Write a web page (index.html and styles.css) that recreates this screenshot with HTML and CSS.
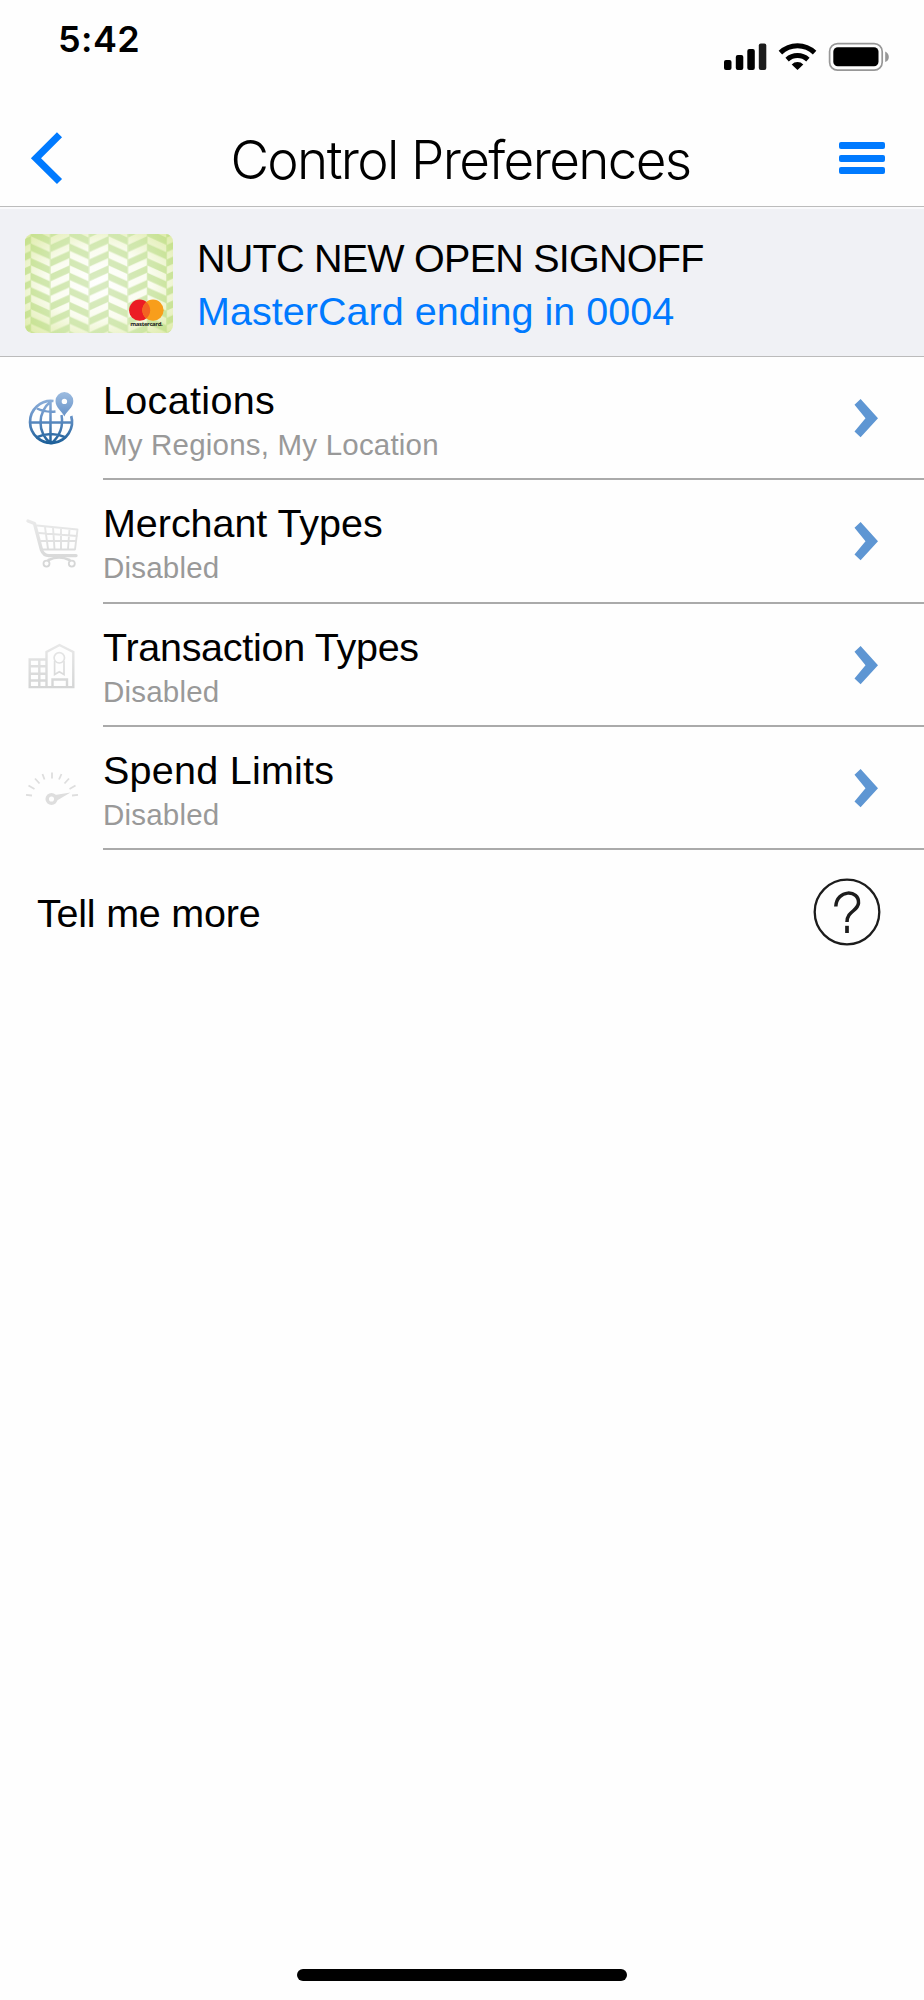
FILE: index.html
```html
<!DOCTYPE html>
<html lang="en">
<head>
<meta charset="utf-8">
<title>Control Preferences</title>
<link rel="stylesheet" href="styles.css">
</head>
<body>
<div class="screen">
  <div class="status">
    <span class="time">5:42</span>
    <svg class="status-icons" width="168" height="32" viewBox="722 41 168 32">
      <rect x="724" y="60" width="7.5" height="10" rx="2"/>
      <rect x="735.8" y="55" width="7.5" height="15" rx="2"/>
      <rect x="747.3" y="49" width="7.5" height="21" rx="2"/>
      <rect x="758.8" y="43.5" width="7.5" height="26.5" rx="2" fill="#1c1c1c"/>
      <g fill="none" stroke="#000" stroke-width="5">
        <path d="M780.4 52.6A24.5 24.5 0 0 1 814.6 52.6"/>
        <path d="M787.1 59.6A15.5 15.5 0 0 1 807.9 59.6"/>
      </g>
      <path d="M797.5 70L791.7 64.4A8.3 8.3 0 0 1 803.3 64.4Z"/>
      <rect x="829.6" y="43.6" width="52.6" height="26.6" rx="8" fill="none" stroke="#979797" stroke-width="1.7"/>
      <rect x="833.3" y="47.3" width="45.2" height="19" rx="4.5"/>
      <path d="M885.2 51.5Q888.8 53 888.8 57T885.2 62Z" fill="#979797"/>
    </svg>
  </div>
  <header class="nav">
    <svg width="36" height="56" viewBox="29 130 36 56"><path d="M59.5 134.7L36 158.2L59.5 181.5" fill="none" stroke="#007aff" stroke-width="7.2" stroke-linejoin="miter"/></svg>
    <h1 class="title">Control Preferences</h1>
    <div class="menu"><i></i><i></i><i></i></div>
  </header>
  <section class="card-info">
    <svg class="card" width="148" height="99" viewBox="0 0 148 99">
      <defs>
        <radialGradient id="glow" cx=".5" cy=".5" r=".72">
          <stop offset="0" stop-color="#fff"/><stop offset=".5" stop-color="#fafcef"/><stop offset="1" stop-color="#dceaa4"/>
        </radialGradient>
        <radialGradient id="leaf" gradientUnits="userSpaceOnUse" cx="74" cy="50" r="95">
          <stop offset="0" stop-color="#d9ebc2"/><stop offset=".6" stop-color="#d0e7ac"/><stop offset="1" stop-color="#c3df83"/>
        </radialGradient>
        <pattern id="chevron" patternUnits="userSpaceOnUse" x="5.8" y="0" width="38.8" height="14.6">
          <path d="M0-5.1L19.4 3.6V10.9L0 2.2ZM0 9.5L19.4 18.2V25.500L0 16.800ZM19.400-3.700L38.800-12.400V-5.100L19.400 3.600ZM19.400 10.900L38.800 2.200V9.500L19.400 18.200Z" fill="#fff"/>
        </pattern>
        <mask id="stripes"><rect width="148" height="99" fill="url(#chevron)"/><path d="M5.8 0V99M25.2 0V99M44.6 0V99M64 0V99M83.4 0V99M102.8 0V99M122.2 0V99M141.6 0V99" stroke="#fff" stroke-opacity=".55" stroke-width="1"/></mask>
        <clipPath id="shape"><rect width="148" height="99" rx="7.5"/></clipPath>
      </defs>
      <g clip-path="url(#shape)">
        <rect width="148" height="99" fill="url(#glow)"/>
        <rect width="148" height="99" fill="url(#leaf)" mask="url(#stripes)"/>
      </g>
      <circle cx="114.7" cy="76.2" r="10.6" fill="#eb1c24"/>
      <circle cx="128" cy="76.2" r="10.6" fill="#f89e1b"/>
      <path d="M121.3 68A10.6 10.6 0 0 1 121.3 84.4A10.6 10.6 0 0 1 121.3 68Z" fill="#f26322"/>
      <text x="105.3" y="92.4" textLength="32.5" class="brand">mastercard.</text>
    </svg>
    <div class="card-text">
      <div class="card-name">NUTC NEW OPEN SIGNOFF</div>
      <div class="card-number">MasterCard ending in 0004</div>
    </div>
  </section>
  <main>
    <div class="row">
      <svg class="icon" width="103" height="120" viewBox="0 -13 103 120">
        <defs><linearGradient id="blue" gradientUnits="userSpaceOnUse" x1="0" y1="22" x2="0" y2="75"><stop offset="0" stop-color="#9dbce0"/><stop offset=".45" stop-color="#6893c8"/><stop offset="1" stop-color="#185c96"/></linearGradient></defs>
        <g fill="none" stroke="url(#blue)" stroke-width="2.7">
          <path d="M53.5 31A21 21 0 1 0 71.2 46"/>
          <path d="M50.500 30.600V74M29.500 52.600L72.500 52.601M51 31C37 43 37 62 51 73.800M61.500 45C63.500 56 60 66 51 73.800M37 38.500Q45 42.500 55.500 41.500M36 67.500Q51 60.500 66 67.500" stroke-width="2.5"/>
        </g>
        <path fill="url(#blue)" fill-rule="evenodd" d="M64.300 46.500C62 41 55.500 38 55.500 31A8.900 8.900 0 0 1 73.300 31C73.300 38 66.500 41 64.300 46.500ZM64.400 28.700A2.700 2.700 0 1 0 64.400 34.100A2.700 2.700 0 1 0 64.400 28.700Z"/>
      </svg>
      <div class="row-body"><div><div class="label l1">Locations</div><div class="sub">My Regions, My Location</div></div>
      <svg class="chev" width="26" height="40" viewBox="0 0 26 40"><path d="M6.600 1L24 20.300L6.600 39.300L.5 33.500L11.500 20.300L.5 6.700Z"/></svg></div>
    </div>
    <div class="row">
      <svg class="icon" width="103" height="120" viewBox="0 -10 103 120">
        <defs><linearGradient id="gray" gradientUnits="userSpaceOnUse" x1="0" y1="25" x2="0" y2="78"><stop offset="0" stop-color="#ececec"/><stop offset="1" stop-color="#d4d5d5"/></linearGradient></defs>
        <g fill="none" stroke="url(#gray)" stroke-linecap="round" stroke-linejoin="round">
          <path d="M28 31L34.500 33.500L41.500 60Q43.500 65.600 49 65.600H76" stroke-width="3.400"/>
          <path d="M37 35.500L77.500 39.500L75 59.500H42.500M39 43L77 46M41 51H76M45 37L48 59M53 37.500L54.500 59M61 38.500V59M69.500 39L68 59" stroke-width="1.900"/>
          <circle cx="46.500" cy="73.600" r="3" stroke-width="1.800"/><circle cx="71.800" cy="73.600" r="3" stroke-width="1.800"/>
          <path d="M48.500 70Q59 65 69.500 70" stroke-width="2.600"/>
        </g>
      </svg>
      <div class="row-body"><div><div class="label l2">Merchant Types</div><div class="sub">Disabled</div></div>
      <svg class="chev" width="26" height="40" viewBox="0 0 26 40"><path d="M6.600 1L24 20.300L6.600 39.300L.5 33.500L11.500 20.300L.5 6.700Z"/></svg></div>
    </div>
    <div class="row">
      <svg class="icon" width="103" height="120" viewBox="0 -6.5 103 120">
        <g fill="none" stroke="url(#gray)" stroke-width="2.4">
          <path d="M46.500 49V41.500L59.500 34.500L73.300 41.500V76.600H29.700V49ZM46.500 49V76.600M39.300 49V76.600M30 55.800H46.500M30 63.200H46.500M30 70H46.500"/>
          <circle cx="59.300" cy="47.300" r="5.200" stroke-width="1.700"/>
          <path d="M54.600 50.500V64L59.300 61.200L64 64V50.500" stroke-width="1.700"/>
          <path d="M52.500 76.500V69H67V76.500"/>
        </g>
      </svg>
      <div class="row-body"><div><div class="label l3">Transaction Types</div><div class="sub">Disabled</div></div>
      <svg class="chev" width="26" height="40" viewBox="0 0 26 40"><path d="M6.600 1L24 20.300L6.600 39.300L.5 33.500L11.500 20.300L.5 6.700Z"/></svg></div>
    </div>
    <div class="row">
      <svg class="icon" width="103" height="120" viewBox="0 0 103 120">
        <g stroke="#dedede" stroke-width="1.800" fill="none">
          <path d="M26 67.800L32 68.500M28.500 58.500L34.500 62M35 51.500L39.500 56.500M42.500 47L44.500 52.500M52 45.500V51.500M61.500 47L59 52.500M69 51.500L64.500 56.500M75.500 58.500L69.500 62M78 67.800L72 68.500"/>
          <circle cx="51.500" cy="72" r="4.300" stroke-width="3.500"/>
        </g>
        <path d="M55 68L70.500 65.500L57 73.500Z" fill="#dedede"/>
      </svg>
      <div class="row-body"><div><div class="label l4">Spend Limits</div><div class="sub">Disabled</div></div>
      <svg class="chev" width="26" height="40" viewBox="0 0 26 40"><path d="M6.600 1L24 20.300L6.600 39.300L.5 33.500L11.500 20.300L.5 6.700Z"/></svg></div>
    </div>
    <div class="more">
      <span class="more-label">Tell me more</span>
      <svg class="help" width="70" height="70" viewBox="0 0 70 70" fill="none" stroke="#1c1c1c">
        <circle cx="35" cy="35" r="32.300" stroke-width="2.300"/>
        <path d="M23.800 29.500C24.500 12 47.500 12.500 46.500 26C46 34 35 34 35 45" stroke-width="3.500"/><path d="M35 48.800V56" stroke-width="3.700"/>
      </svg>
    </div>
  </main>
  <div class="home"></div>
</div>
</body>
</html>
```
FILE: styles.css
```css
* { box-sizing: border-box; }
body { margin: 0; background: #fefefe; color: #000; font-family: "Liberation Sans", Arial, sans-serif; }
.screen { width: 924px; height: 2000px; display: flex; flex-direction: column; }
.status { height: 110px; display: flex; justify-content: space-between; align-items: flex-start; padding: 17px 34px 0 58px; }
.time { font: 600 36px/44px Inter, sans-serif; letter-spacing: .4px; }
.status-icons { margin-top: 24px; }
.nav { height: 97px; display: flex; justify-content: space-between; align-items: center; padding: 0 39px 0 29px; border-bottom: 1px solid #bcbcbc; }
.title { margin: 4px 0 0 17px; font: 300 53px/64px Inter, sans-serif; letter-spacing: -1.65px; white-space: nowrap; }
.menu { width: 46px; display: flex; flex-direction: column; gap: 5.5px; }
.menu i { height: 7px; border-radius: 2px; background: #007aff; }
.card-info { height: 150px; display: flex; gap: 24.5px; padding: 25px 25px 0 24.5px; background: #f0f1f5; border-top: 2px solid #fafafc; border-bottom: 1px solid #bbb; }
.card { flex: none; }
.brand { font: 700 6px "Open Sans", sans-serif; fill: #222; }
.card-text { font-size: 39.5px; white-space: nowrap; }
.card-name { line-height: 48px; letter-spacing: -.75px; }
.card-number { line-height: 58px; color: #007aff; letter-spacing: .03px; }
.row { height: 123.25px; display: flex; }
.icon { flex: none; }
.row-body { flex: 1; display: flex; justify-content: space-between; align-items: flex-start; border-bottom: 2px solid #aaa; padding: 20px 44px 0 0; }
.label { font-size: 39.5px; line-height: 46px; }
.l1 { letter-spacing: .33px; }
.l2 { letter-spacing: -.05px; }
.l3 { letter-spacing: -.28px; }
.l4 { letter-spacing: .25px; }
.sub { font-size: 29.5px; line-height: 44px; letter-spacing: .2px; color: #999; }
.chev { margin-top: 21px; fill: #5e96d3; }
.more { display: flex; justify-content: space-between; align-items: center; height: 126px; padding: 0 42px 0 37px; }
.more-label { font-size: 39.5px; letter-spacing: -.22px; }
.help { margin-bottom: 3px; }
.home { margin: auto auto 19px; width: 330px; height: 12px; border-radius: 6px; background: #000; }
```
